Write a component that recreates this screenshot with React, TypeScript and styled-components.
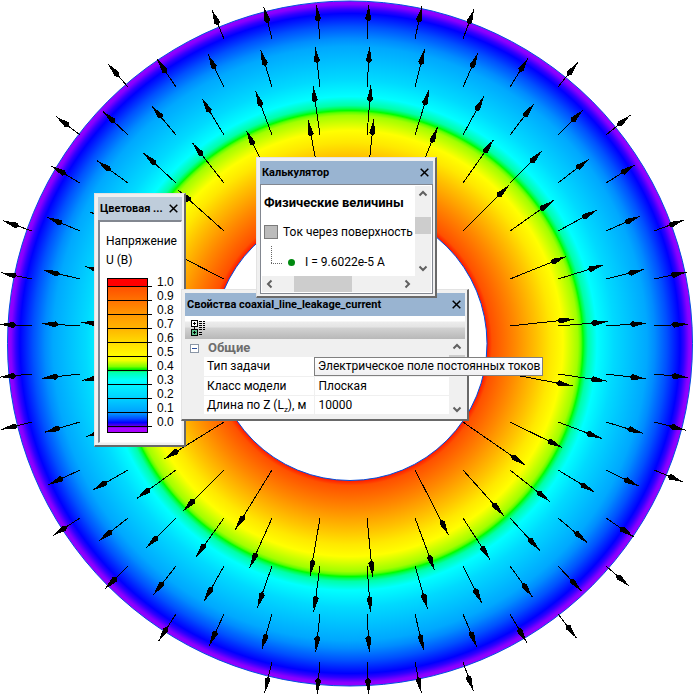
import React from "react";
import styled, { createGlobalStyle, css } from "styled-components";

const GlobalStyle = createGlobalStyle`
  *, *::before, *::after { box-sizing: border-box; }
  body { margin: 0; background: #fff; overflow: hidden; }
`;

const Desktop = styled.main`
  position: relative;
  width: 100%;
  min-height: 100vh;
  overflow: hidden;
  color: #000;
  font: 12px/16px Roboto, "Noto Sans", sans-serif;
`;

const Field = styled.svg`
  display: block;
  width: 100%;
  height: auto;
`;

const Pane = styled.section<{ $x: number; $y: number; $w: number; $h: number }>`
  position: absolute;
  left: ${(p) => p.$x}px;
  top: ${(p) => p.$y}px;
  width: ${(p) => p.$w}px;
  min-height: ${(p) => p.$h}px;
  display: flex;
  flex-direction: column;
  padding: 3px 2px 2px 3px;
  background: #f0f0f0;
  border: 1px solid #e3e3e3;
  border-right: 2px solid #696969;
  border-bottom: 2px solid #696969;
`;

const TitleBar = styled.header<{ $muted?: boolean }>`
  display: flex;
  align-items: center;
  justify-content: space-between;
  height: 23px;
  padding: 0 2px;
  background: ${(p) => (p.$muted ? "#bfcddb" : "#99b4d1")};
`;

const Title = styled.h2`
  margin: 0;
  white-space: nowrap;
  font: 700 11px/16px Roboto, "Noto Sans", sans-serif;
`;

const PlainButton = styled.button`
  display: grid;
  place-items: center;
  flex: none;
  padding: 0;
  border: 0;
  background: transparent;
  color: #000;
`;

const CloseButton = styled(PlainButton)`
  width: 14px;
  height: 16px;
`;

const Sunken = styled.div`
  flex: 1;
  display: flex;
  border: 1px solid #828790;
  background: #fff;
`;

const LegendBody = styled(Sunken)`
  flex-direction: column;
  border-width: 2px 1px 1px 2px;
  border-right-color: #f8f8f8;
  border-bottom-color: #f8f8f8;
  padding: 10px 0 0 6px;
`;

const LegendCaption = styled.p`
  margin: 0;
  line-height: 19px;
`;

const Scale = styled.div`
  display: flex;
  align-items: flex-start;
  gap: 5px;
  margin-top: 4px;
`;

const ScaleBar = styled.svg`
  width: 46px;
  height: 160px;
`;

const ScaleLabels = styled.ol`
  margin: 0;
  padding: 1px 0 0;
  list-style: none;
  font: 12px/14px "Liberation Sans", Arial, sans-serif;
`;

const CalcBody = styled(Sunken)`
  display: grid;
  grid-template-columns: 1fr 16px;
  grid-template-rows: 1fr 16px;
  padding: 1px;
`;

const Quantities = styled.div`
  display: flex;
  flex-direction: column;
  padding: 7px 0 0 2px;
  overflow: hidden;
  white-space: nowrap;
`;

const GroupTitle = styled.h3`
  margin: 0;
  font: 700 13px/20px Roboto, "Noto Sans", sans-serif;
`;

const CheckRow = styled.label`
  display: flex;
  align-items: center;
  gap: 5px;
  height: 20px;
  margin-top: 9px;
`;

const CheckBox = styled.input`
  appearance: none;
  flex: none;
  width: 14px;
  height: 14px;
  margin: 0;
  border: 1px solid #7b7b7b;
  background: #bbb;
`;

const ResultRow = styled.div`
  display: flex;
  align-items: center;
  height: 20px;
  margin-top: 10px;
  padding-left: 7px;
`;

const Branch = styled.svg`
  align-self: flex-start;
  flex: none;
  width: 12px;
  height: 12px;
  overflow: visible;
`;

const Dot = styled.span`
  width: 7px;
  height: 7px;
  margin: 0 10px 0 5px;
  border-radius: 50%;
  background: #008a10;
`;

const ScrollTrack = styled.div<{ $horizontal?: boolean }>`
  display: flex;
  flex-direction: ${(p) => (p.$horizontal ? "row" : "column")};
  background: #f0f0f0;
`;

const ScrollButton = styled(PlainButton)`
  width: 16px;
  height: 16px;
  background: #f0f0f0;
`;

const Thumb = styled.div<{ $before: number; $size: number; $horizontal?: boolean }>`
  background: #cdcdcd;
  ${(p) =>
    p.$horizontal
      ? css`
          width: ${p.$size}px;
          margin: 0 auto 0 ${p.$before}px;
        `
      : css`
          height: ${p.$size}px;
          margin: ${p.$before}px 0 auto;
        `}
`;

const Corner = styled.div`
  background: #f0f0f0;
`;

const Toolbar = styled.div`
  display: flex;
  align-items: center;
  height: 23px;
  padding-left: 5px;
  background: linear-gradient(#fff 0, #fff 5px, #ececec 6px, #e4e4e4 11px, #d2d2d2 12px, #b8b8b8);
`;

const PropsBody = styled.div`
  display: grid;
  grid-template-columns: 1fr 16px;
  flex: 1;
`;

const Category = styled.div`
  display: flex;
  align-items: center;
  gap: 9px;
  height: 18px;
  padding-left: 5px;
  color: #6d6d6d;
  font-size: 13px;
  font-weight: 700;
`;

const Toggle = styled(PlainButton)`
  width: 9px;
  height: 9px;
  border: 1px solid #8a96a6;
  background: #fff;
`;

const Grid = styled.table`
  width: 245px;
  margin-left: 19px;
  border-collapse: collapse;
  table-layout: fixed;
  background: #fff;
`;

const Name = styled.th`
  width: 110px;
  height: 19px;
  padding: 0 0 0 3px;
  border-right: 1px solid #f0f0f0;
  border-bottom: 1px solid #f0f0f0;
  font-weight: 400;
  line-height: 16px;
  text-align: left;
  white-space: nowrap;
`;

const Value = styled.td`
  padding: 0 0 0 4px;
  border-bottom: 1px solid #f0f0f0;
  white-space: nowrap;
`;

const Sub = styled.sub`
  font-size: 8px;
  line-height: 0;
`;

const Tooltip = styled.div`
  position: absolute;
  left: 314px;
  top: 357px;
  height: 19px;
  padding: 0 2px 0 3px;
  border: 1px solid #808080;
  background: linear-gradient(#fff, #f0f0f2);
  line-height: 17px;
  white-space: nowrap;
`;

const CENTER = { x: 350, y: 343.5 };
const OUTER = 343;
const INNER = 137;
const FLUX = 10400;

const stops: [number, string][] = [
  [137, "#ff1800"],
  [142, "#ff5000"],
  [165, "#ff8800"],
  [188, "#ffc400"],
  [201, "#ffe800"],
  [213, "#ffff00"],
  [228, "#a0ff00"],
  [231, "#60ff00"],
  [233, "#00ff00"],
  [235, "#00ff50"],
  [238, "#00ffa8"],
  [247, "#00ffff"],
  [254, "#00f0ff"],
  [264, "#00daff"],
  [284, "#00bcff"],
  [297, "#00a8ff"],
  [305, "#008cff"],
  [317, "#0050ff"],
  [330, "#0000ff"],
  [334, "#3000ff"],
  [339, "#8800ff"],
  [343, "#9c00ff"],
];

const columns = [32, 80, 128, 176, 224, 272, 320, 367, 415, 463, 510, 558, 606, 654];
const rows = [39, 87, 135, 183, 231, 279, 326, 374, 422, 470, 518, 566, 614, 662];

const arrows = columns.flatMap((x) =>
  rows
    .map((y) => ({ x, y, dx: x - CENTER.x, dy: y - CENTER.y }))
    .map((p) => ({ ...p, r: Math.hypot(p.dx, p.dy) }))
    .filter((p) => p.r > INNER && p.r < 342)
);

function Arrow({ x, y, dx, dy, r }: { x: number; y: number; dx: number; dy: number; r: number }) {
  const len = FLUX / r;
  const ux = dx / r;
  const uy = dy / r;
  const at = (along: number, side: number) =>
    `${(x + ux * along - uy * side).toFixed(1)},${(y + uy * along + ux * side).toFixed(1)}`;
  return (
    <>
      <polyline points={`${at(0, 0)} ${at(len, 0)}`} stroke="#000" fill="none" />
      <polygon points={[at(len, 0), at(len - 14, 3), at(len - 17, 0), at(len - 14, -3)].join(" ")} />
    </>
  );
}

function FieldPlot() {
  return (
    <Field viewBox="0 0 693 694" role="img" aria-label="Напряжение U (В)">
      <defs>
        <radialGradient id="potential" gradientUnits="userSpaceOnUse" cx={CENTER.x} cy={CENTER.y} r={OUTER}>
          {stops.map(([r, color]) => (
            <stop key={r} offset={r / OUTER} stopColor={color} />
          ))}
        </radialGradient>
      </defs>
      <circle cx={CENTER.x} cy={CENTER.y} r={342.5} fill="url(#potential)" stroke="#0050e0" />
      <circle cx={CENTER.x} cy={CENTER.y} r={INNER} fill="#fff" stroke="#0050e0" />
      <g shapeRendering="crispEdges">
        {arrows.map((a) => (
          <Arrow key={`${a.x}-${a.y}`} {...a} />
        ))}
      </g>
    </Field>
  );
}

function Close() {
  return (
    <CloseButton type="button" aria-label="Закрыть">
      <svg width="9" height="9" viewBox="0 0 9 9" stroke="currentColor" strokeWidth="1.5">
        <path d="M.7.7l7.6 7.6M8.3.7L.7 8.3" />
      </svg>
    </CloseButton>
  );
}

const chevrons = {
  up: "M1.5 6.5L5 3l3.5 3.5",
  down: "M1.5 3.5L5 7l3.5-3.5",
  left: "M6.5 1.5L3 5l3.5 3.5",
  right: "M3.5 1.5L7 5 3.5 8.5",
};

function ScrollArrow({ dir, label }: { dir: keyof typeof chevrons; label: string }) {
  return (
    <ScrollButton type="button" aria-label={label}>
      <svg width="10" height="10" viewBox="0 0 10 10" fill="none" stroke="#606060" strokeWidth="2">
        <path d={chevrons[dir]} />
      </svg>
    </ScrollButton>
  );
}

const labels = ["1.0", "0.9", "0.8", "0.7", "0.6", "0.5", "0.4", "0.3", "0.2", "0.1", "0.0"];
const scaleStops: [number, string][] = [
  [0, "#ff0000"],
  [8, "#ff0000"],
  [9, "#ff5000"],
  [36, "#ff9800"],
  [50, "#ffb400"],
  [64, "#ffdc00"],
  [76, "#fff800"],
  [82, "#f0ff00"],
  [88, "#80ff00"],
  [91, "#00f000"],
  [94, "#00ffb0"],
  [102, "#00ffff"],
  [120, "#00d0ff"],
  [134, "#00a0ff"],
  [140, "#0050ff"],
  [144, "#0000ff"],
  [148, "#7000e0"],
  [150, "#a800ff"],
  [154, "#a800ff"],
];

function LegendPane() {
  return (
    <Pane $x={94} $y={193} $w={92} $h={254}>
      <TitleBar $muted>
        <Title>Цветовая ...</Title>
        <Close />
      </TitleBar>
      <LegendBody>
        <LegendCaption>Напряжение</LegendCaption>
        <LegendCaption>U (В)</LegendCaption>
        <Scale>
          <ScaleBar viewBox="0 0 46 160" shapeRendering="crispEdges" aria-hidden="true">
            <defs>
              <linearGradient id="scale" x1="0" y1="0" x2="0" y2="1">
                {scaleStops.map(([y, color]) => (
                  <stop key={y} offset={y / 154} stopColor={color} />
                ))}
              </linearGradient>
            </defs>
            <rect x="1.5" y="4.5" width="40" height="154" fill="url(#scale)" stroke="#000" />
            {labels.map((label, i) => (
              <path key={label} d={`M1 ${12.5 + 14 * i}h45`} stroke="#000" />
            ))}
          </ScaleBar>
          <ScaleLabels>
            {labels.map((label) => (
              <li key={label}>{label}</li>
            ))}
          </ScaleLabels>
        </Scale>
      </LegendBody>
    </Pane>
  );
}

function CalculatorPane() {
  return (
    <Pane $x={256} $y={157} $w={181} $h={141}>
      <TitleBar>
        <Title>Калькулятор</Title>
        <Close />
      </TitleBar>
      <CalcBody>
        <Quantities>
          <GroupTitle>Физические величины</GroupTitle>
          <CheckRow>
            <CheckBox type="checkbox" />
            Ток через поверхность
          </CheckRow>
          <ResultRow>
            <Branch viewBox="0 0 12 12" fill="none" stroke="#666" strokeDasharray="1 1" shapeRendering="crispEdges">
              <path d="M.5-6v18M0 11.500h12" />
            </Branch>
            <Dot />
            I = 9.6022e-5 A
          </ResultRow>
        </Quantities>
        <ScrollTrack>
          <ScrollArrow dir="up" label="Вверх" />
          <Thumb $before={15} $size={17} />
          <ScrollArrow dir="down" label="Вниз" />
        </ScrollTrack>
        <ScrollTrack $horizontal>
          <ScrollArrow dir="left" label="Влево" />
          <Thumb $horizontal $before={16} $size={58} />
          <ScrollArrow dir="right" label="Вправо" />
        </ScrollTrack>
        <Corner />
      </CalcBody>
    </Pane>
  );
}

function PropertiesPane() {
  return (
    <Pane $x={181} $y={289} $w={288} $h={132}>
      <TitleBar>
        <Title>Свойства coaxial_line_leakage_current</Title>
        <Close />
      </TitleBar>
      <Toolbar>
        <PlainButton type="button" aria-label="По категориям">
          <svg width="16" height="16" viewBox="0 0 16 16" fill="none" stroke="#000" shapeRendering="crispEdges">
            <path d="M1.500.500h6v6h-6z" fill="#fff" />
            <path d="M1.500 9.500h6v6h-6z" fill="#5fc08c" />
            <path d="M4.500 2v3M3 3.500h3M4.500 7v2M4.500 11v3M3 12.500h3" />
            <path d="M9 1.500h3M9 3.500h3M9 5.500h3M9 7.500h3M9 9.500h3M9 12.500h3M9 14.500h3M13 1.500h2M13 3.500h2M13 5.500h2M13 7.500h2M13 9.500h2" />
          </svg>
        </PlainButton>
      </Toolbar>
      <PropsBody>
        <div>
          <Category>
            <Toggle type="button" aria-label="Свернуть">
              <svg width="5" height="1" viewBox="0 0 5 1">
                <path d="M0 0h5v1H0z" fill="#2b4f9e" />
              </svg>
            </Toggle>
            Общие
          </Category>
          <Grid>
            <tbody>
              <tr>
                <Name scope="row">Тип задачи</Name>
                <Value />
              </tr>
              <tr>
                <Name scope="row">Класс модели</Name>
                <Value>Плоская</Value>
              </tr>
              <tr>
                <Name scope="row">
                  Длина по Z (L<Sub>z</Sub>), м
                </Name>
                <Value>10000</Value>
              </tr>
            </tbody>
          </Grid>
        </div>
        <ScrollTrack>
          <ScrollArrow dir="up" label="Вверх" />
          <Thumb $before={0} $size={18} />
          <ScrollArrow dir="down" label="Вниз" />
        </ScrollTrack>
      </PropsBody>
    </Pane>
  );
}

export default function App() {
  return (
    <Desktop>
      <GlobalStyle />
      <FieldPlot />
      <LegendPane />
      <PropertiesPane />
      <CalculatorPane />
      <Tooltip role="tooltip">Электрическое поле постоянных токов</Tooltip>
    </Desktop>
  );
}
